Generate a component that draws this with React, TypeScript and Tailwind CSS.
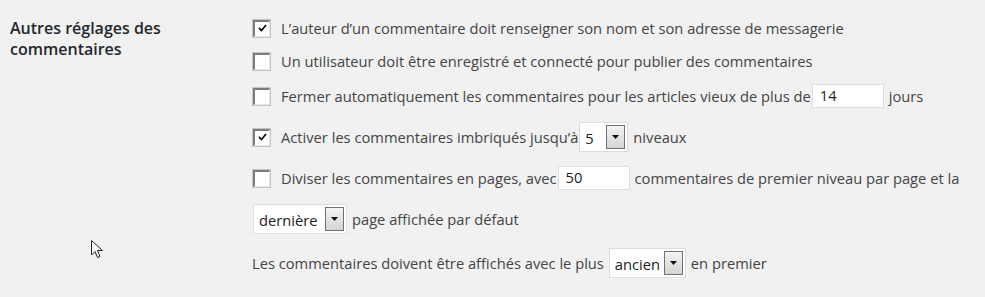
import React from "react";

function Checkbox({ checked }: { checked?: boolean }) {
  return (
    <span className="inline-flex h-[19px] w-[19px] shrink-0 border border-[#c4c4c4] bg-white">
      <span className="relative flex h-full w-full items-center justify-center border-l-2 border-t-2 border-[#7c7c7c] border-r border-b border-r-[#e8e8e8] border-b-[#e8e8e8] bg-white">
        {checked && (
          <svg width="9" height="8" viewBox="0 0 9 8" className="mt-[-1px]">
            <path d="M1 4 L3.5 6.5 L8 1" fill="none" stroke="#111" strokeWidth="1.8" />
          </svg>
        )}
      </span>
    </span>
  );
}

function Arrow() {
  return (
    <span className="ml-auto flex h-[24px] w-[19px] shrink-0 items-start justify-center border border-[#707070] bg-gradient-to-b from-[#f4f4f4] to-[#d4d4d4] pt-[9px]">
      <svg width="7" height="4" viewBox="0 0 7 4">
        <path d="M0 0 H7 L3.5 4 Z" fill="#111" />
      </svg>
    </span>
  );
}

function Select({ value, w }: { value: string; w: string }) {
  return (
    <span className={`inline-flex h-[30px] items-center border border-[#ddd] bg-white pl-[5px] pr-[2px] text-[#222] ${w}`}>
      <span className="whitespace-nowrap pt-[2px]">{value}</span>
      <Arrow />
    </span>
  );
}

function Input({ value, w }: { value: string; w: string }) {
  return (
    <span className={`inline-flex h-[24px] items-center border border-[#ddd] bg-white pl-[7px] text-[#222] ${w}`}>
      <span className="mt-[-3px]">{value}</span>
    </span>
  );
}

export default function App() {
  return (
    <div
      className="relative h-[297px] w-[985px] overflow-hidden bg-[#f1f1f1] text-[14.7px] text-[#444]"
      style={{ fontFamily: '"Open Sans", "Noto Sans", sans-serif' }}
    >
      <div className="flex">
        <div className="w-[252px] shrink-0 pl-[10px] pt-[18px] text-[16px] font-semibold leading-[21px] text-[#23282d]">
          Autres réglages des
          <br />
          commentaires
        </div>
        <div className="flex flex-col pt-[12px]">
          <div className="flex h-[32px] items-center">
            <Checkbox checked />
            <span className="ml-[10px]">L’auteur d’un commentaire doit renseigner son nom et son adresse de messagerie</span>
          </div>
          <div className="flex h-[34px] items-center">
            <Checkbox />
            <span className="ml-[10px]">Un utilisateur doit être enregistré et connecté pour publier des commentaires</span>
          </div>
          <div className="flex h-[36px] items-center">
            <Checkbox />
            <span className="ml-[10px]">Fermer automatiquement les commentaires pour les articles vieux de plus de</span>
            <span className="ml-[1px]"><Input value="14" w="w-[72px]" /></span>
            <span className="ml-[5px]">jours</span>
          </div>
          <div className="flex h-[46px] items-center">
            <Checkbox checked />
            <span className="ml-[10px]">Activer les commentaires imbriqués jusqu’à</span>
            <span className="ml-[1px] flex"><Select value="5" w="w-[49px]" /></span>
            <span className="ml-[5px]">niveaux</span>
          </div>
          <div className="flex h-[36px] items-center">
            <Checkbox />
            <span className="ml-[10px]">Diviser les commentaires en pages, avec</span>
            <span className="ml-[1px]"><Input value="50" w="w-[72px]" /></span>
            <span className="ml-[5px]">commentaires de premier niveau par page et la</span>
          </div>
          <div className="flex h-[46px] items-center">
            <span className="ml-[1px] flex"><Select value="dernière" w="w-[94px]" /></span>
            <span className="ml-[5px]">page affichée par défaut</span>
          </div>
          <div className="flex h-[42px] items-center">
            <span>Les commentaires doivent être affichés avec le plus</span>
            <span className="ml-[5px] flex"><Select value="ancien" w="w-[77px]" /></span>
            <span className="ml-[5px]">en premier</span>
          </div>
        </div>
      </div>
      <svg
        className="absolute left-[91px] top-[240px]"
        width="13"
        height="19"
        viewBox="0 0 13 19"
      >
        <path
          d="M0.5 0.5 L0.5 15 L4 11.5 L6.5 17.5 L9 16.5 L6.5 10.5 L11.5 10.5 Z"
          fill="#fafafa"
          stroke="#222"
          strokeWidth="1"
          strokeLinejoin="miter"
        />
      </svg>
    </div>
  );
}
